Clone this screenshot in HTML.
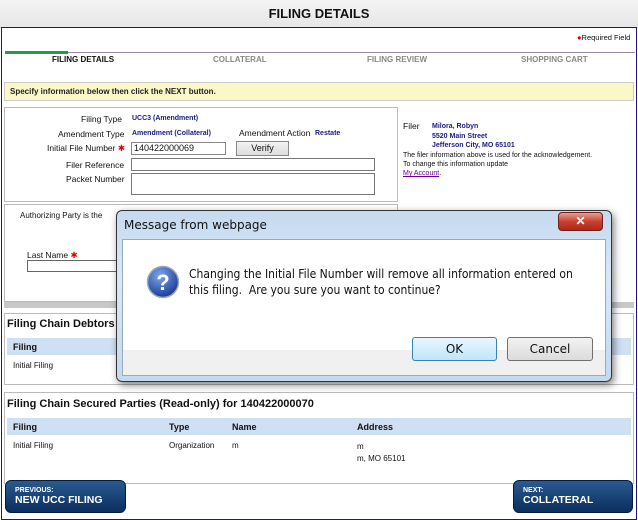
<!DOCTYPE html>
<html><head><style>
*{margin:0;padding:0;box-sizing:border-box}
body{width:638px;height:520px;position:relative;overflow:hidden;background:#fff;font-family:"Liberation Sans",Arial,sans-serif;font-size:8px;color:#111}
.a{position:absolute}
.b{font-weight:bold}
.nv{color:#1a1a80;font-weight:bold}
.th{background:#cfe0f3;font-weight:bold;font-size:9px}
.btn{border-radius:6px;background:linear-gradient(#2a5a90,#0b2e5e);color:#fff;font-weight:bold;border:1px solid #061c3c}
</style></head><body>
<div class="a" style="left:0;top:0;width:638px;height:28px;background:linear-gradient(#f4f4f4,#e6e6e6);border-bottom:1px solid #ccc"></div>
<div class="a b" style="left:0;top:6px;width:638px;text-align:center;font-size:13px">FILING DETAILS</div>
<div class="a" style="left:1px;top:27px;width:636px;height:493px;border:1.5px solid #1a1a7a"></div>
<div class="a" style="left:577px;top:33px;font-size:7.5px"><span style="color:#d00">●</span>Required Field</div>
<div class="a" style="left:5px;top:52px;width:630px;height:1px;background:#9a8ba0"></div>
<div class="a" style="left:5px;top:51px;width:63px;height:3px;background:#2a9a4a"></div>
<div class="a b" style="left:52px;top:55px;font-size:8px">FILING DETAILS</div>
<div class="a b" style="left:213px;top:55px;color:#888">COLLATERAL</div>
<div class="a b" style="left:367px;top:55px;color:#888">FILING REVIEW</div>
<div class="a b" style="left:521px;top:55px;color:#888">SHOPPING CART</div>
<div class="a" style="left:4px;top:82px;width:630px;height:19px;background:#fbf8c8;border:1px solid #ccc"></div>
<div class="a b" style="left:10px;top:87px;color:#222">Specify information below then click the NEXT button.</div>
<div class="a" style="left:4px;top:107px;width:394px;height:95px;border:1px solid #bbb"></div>
<div class="a" style="left:81px;top:114px;font-size:8.5px">Filing Type</div>
<div class="a nv" style="left:132px;top:115px;font-size:7px">UCC3 (Amendment)</div>
<div class="a" style="left:58px;top:129px;font-size:8.5px">Amendment Type</div>
<div class="a nv" style="left:132px;top:130px;font-size:7px">Amendment (Collateral)</div>
<div class="a" style="left:239px;top:128px;font-size:8.5px">Amendment Action</div>
<div class="a nv" style="left:315px;top:130px;font-size:7px">Restate</div>
<div class="a" style="left:47px;top:143px;font-size:8.5px">Initial File Number <span style="color:#d00">✱</span></div>
<div class="a" style="left:131px;top:142px;width:95px;height:13px;border:1px solid #888;font-size:9px;padding-left:2px">140422000069</div>
<div class="a" style="left:236px;top:141px;width:53px;height:15px;border:1px solid #888;background:linear-gradient(#f2f2f2,#ddd);text-align:center;font-size:9px;line-height:13px">Verify</div>
<div class="a" style="left:66px;top:160px;font-size:8.5px">Filer Reference</div>
<div class="a" style="left:131px;top:158px;width:244px;height:13px;border:1px solid #777"></div>
<div class="a" style="left:66px;top:174px;font-size:8.5px">Packet Number</div>
<div class="a" style="left:131px;top:173px;width:244px;height:22px;border:1px solid #777"></div>
<div class="a" style="left:403px;top:121px;font-size:8.5px">Filer</div>
<div class="a nv" style="left:432px;top:122px;font-size:7px;line-height:9.5px">Milora, Robyn<br>5520 Main Street<br>Jefferson City, MO 65101</div>
<div class="a" style="left:403px;top:151px;font-size:7px;line-height:9px">The filer information above is used for the acknowledgement.<br>To change this information update<br><span style="color:#609;text-decoration:underline">My Account</span>.</div>
<div class="a" style="left:4px;top:204px;width:394px;height:98px;border:1px solid #bbb"></div>
<div class="a" style="left:20px;top:211px;font-size:8px">Authorizing Party is the</div>
<div class="a" style="left:27px;top:250px;font-size:8.5px">Last Name <span style="color:#d00">✱</span></div>
<div class="a" style="left:27px;top:260px;width:95px;height:12px;border:1px solid #666"></div>
<div class="a" style="left:4px;top:302px;width:630px;height:6px;background:#c8c8c8"></div>
<div class="a" style="left:4px;top:313px;width:630px;height:72px;border:1px solid #bbb"></div>
<div class="a b" style="left:7px;top:318px;font-size:11px">Filing Chain Debtors</div>
<div class="a th" style="left:7px;top:338px;width:624px;height:17px;padding:4px 6px">Filing</div>
<div class="a" style="left:13px;top:361px">Initial Filing</div>
<div class="a" style="left:4px;top:392px;width:630px;height:92px;border:1px solid #bbb"></div>
<div class="a b" style="left:7px;top:398px;font-size:11px">Filing Chain Secured Parties (Read-only) for 140422000070</div>
<div class="a" style="left:7px;top:418px;width:624px;height:17px;background:#cfe0f3"></div>
<div class="a b" style="left:13px;top:422px;font-size:9px">Filing</div>
<div class="a b" style="left:169px;top:422px;font-size:9px">Type</div>
<div class="a b" style="left:232px;top:422px;font-size:9px">Name</div>
<div class="a b" style="left:357px;top:422px;font-size:9px">Address</div>
<div class="a" style="left:13px;top:441px">Initial Filing</div>
<div class="a" style="left:169px;top:441px">Organization</div>
<div class="a" style="left:232px;top:441px">m</div>
<div class="a" style="left:357px;top:441px;line-height:12px">m<br>m, MO 65101</div>
<div class="a btn" style="left:5px;top:480px;width:121px;height:33px;padding:6px 0 0 9px"><div style="font-size:7px">PREVIOUS:</div><div style="font-size:10.5px">NEW UCC FILING</div></div>
<div class="a btn" style="left:513px;top:480px;width:120px;height:33px;padding:6px 0 0 9px"><div style="font-size:7px">NEXT:</div><div style="font-size:10.5px">COLLATERAL</div></div>
<!-- dialog -->
<div class="a" style="left:116px;top:210px;width:496px;height:172px;border:1px solid #333;border-radius:6px;background:linear-gradient(#c5daf0,#d9e8f7 40%,#c4d9ef);box-shadow:2px 3px 8px rgba(0,0,0,.5)"></div>
<div class="a" style="left:124px;top:218px;font-size:12px;font-family:'DejaVu Sans',sans-serif;color:#111">Message from webpage</div>
<div class="a" style="left:558px;top:212px;width:45px;height:19px;border:1px solid #6a2020;border-radius:4px;background:linear-gradient(#e8a090,#c84030 50%,#b02818);color:#fff;font-weight:bold;text-align:center;font-size:12px;line-height:17px">✕</div>
<div class="a" style="left:122px;top:239px;width:484px;height:137px;background:#f0f0f0;border:1px solid #9ab"></div>
<div class="a" style="left:123px;top:240px;width:482px;height:110px;background:#fff"></div>
<svg class="a" style="left:146px;top:265px" width="34" height="34"><defs><radialGradient id="g" cx=".4" cy=".3" r=".7"><stop offset="0" stop-color="#7fa8ea"/><stop offset="1" stop-color="#1a3c96"/></radialGradient></defs><circle cx="17" cy="17" r="15.5" fill="url(#g)" stroke="#9ab" stroke-width="1.5"/><text x="17" y="25" text-anchor="middle" fill="#fff" font-size="22" font-weight="bold" font-family="Liberation Sans">?</text></svg>
<div class="a" style="left:189px;top:266px;font-size:12px;line-height:16px;font-family:'DejaVu Sans Condensed','DejaVu Sans',sans-serif;color:#111">Changing the Initial File Number will remove all information entered on<br>this filing.&nbsp; Are you sure you want to continue?</div>
<div class="a" style="left:412px;top:337px;width:85px;height:24px;border:1px solid #3c7fb1;border-radius:3px;background:linear-gradient(#eaf6fd,#bee6fd);text-align:center;line-height:22px;font-size:12px;font-family:'DejaVu Sans',sans-serif">OK</div>
<div class="a" style="left:507px;top:337px;width:86px;height:24px;border:1px solid #707070;border-radius:3px;background:linear-gradient(#f2f2f2,#dcdcdc);text-align:center;line-height:22px;font-size:12px;font-family:'DejaVu Sans',sans-serif">Cancel</div>
</body></html>
